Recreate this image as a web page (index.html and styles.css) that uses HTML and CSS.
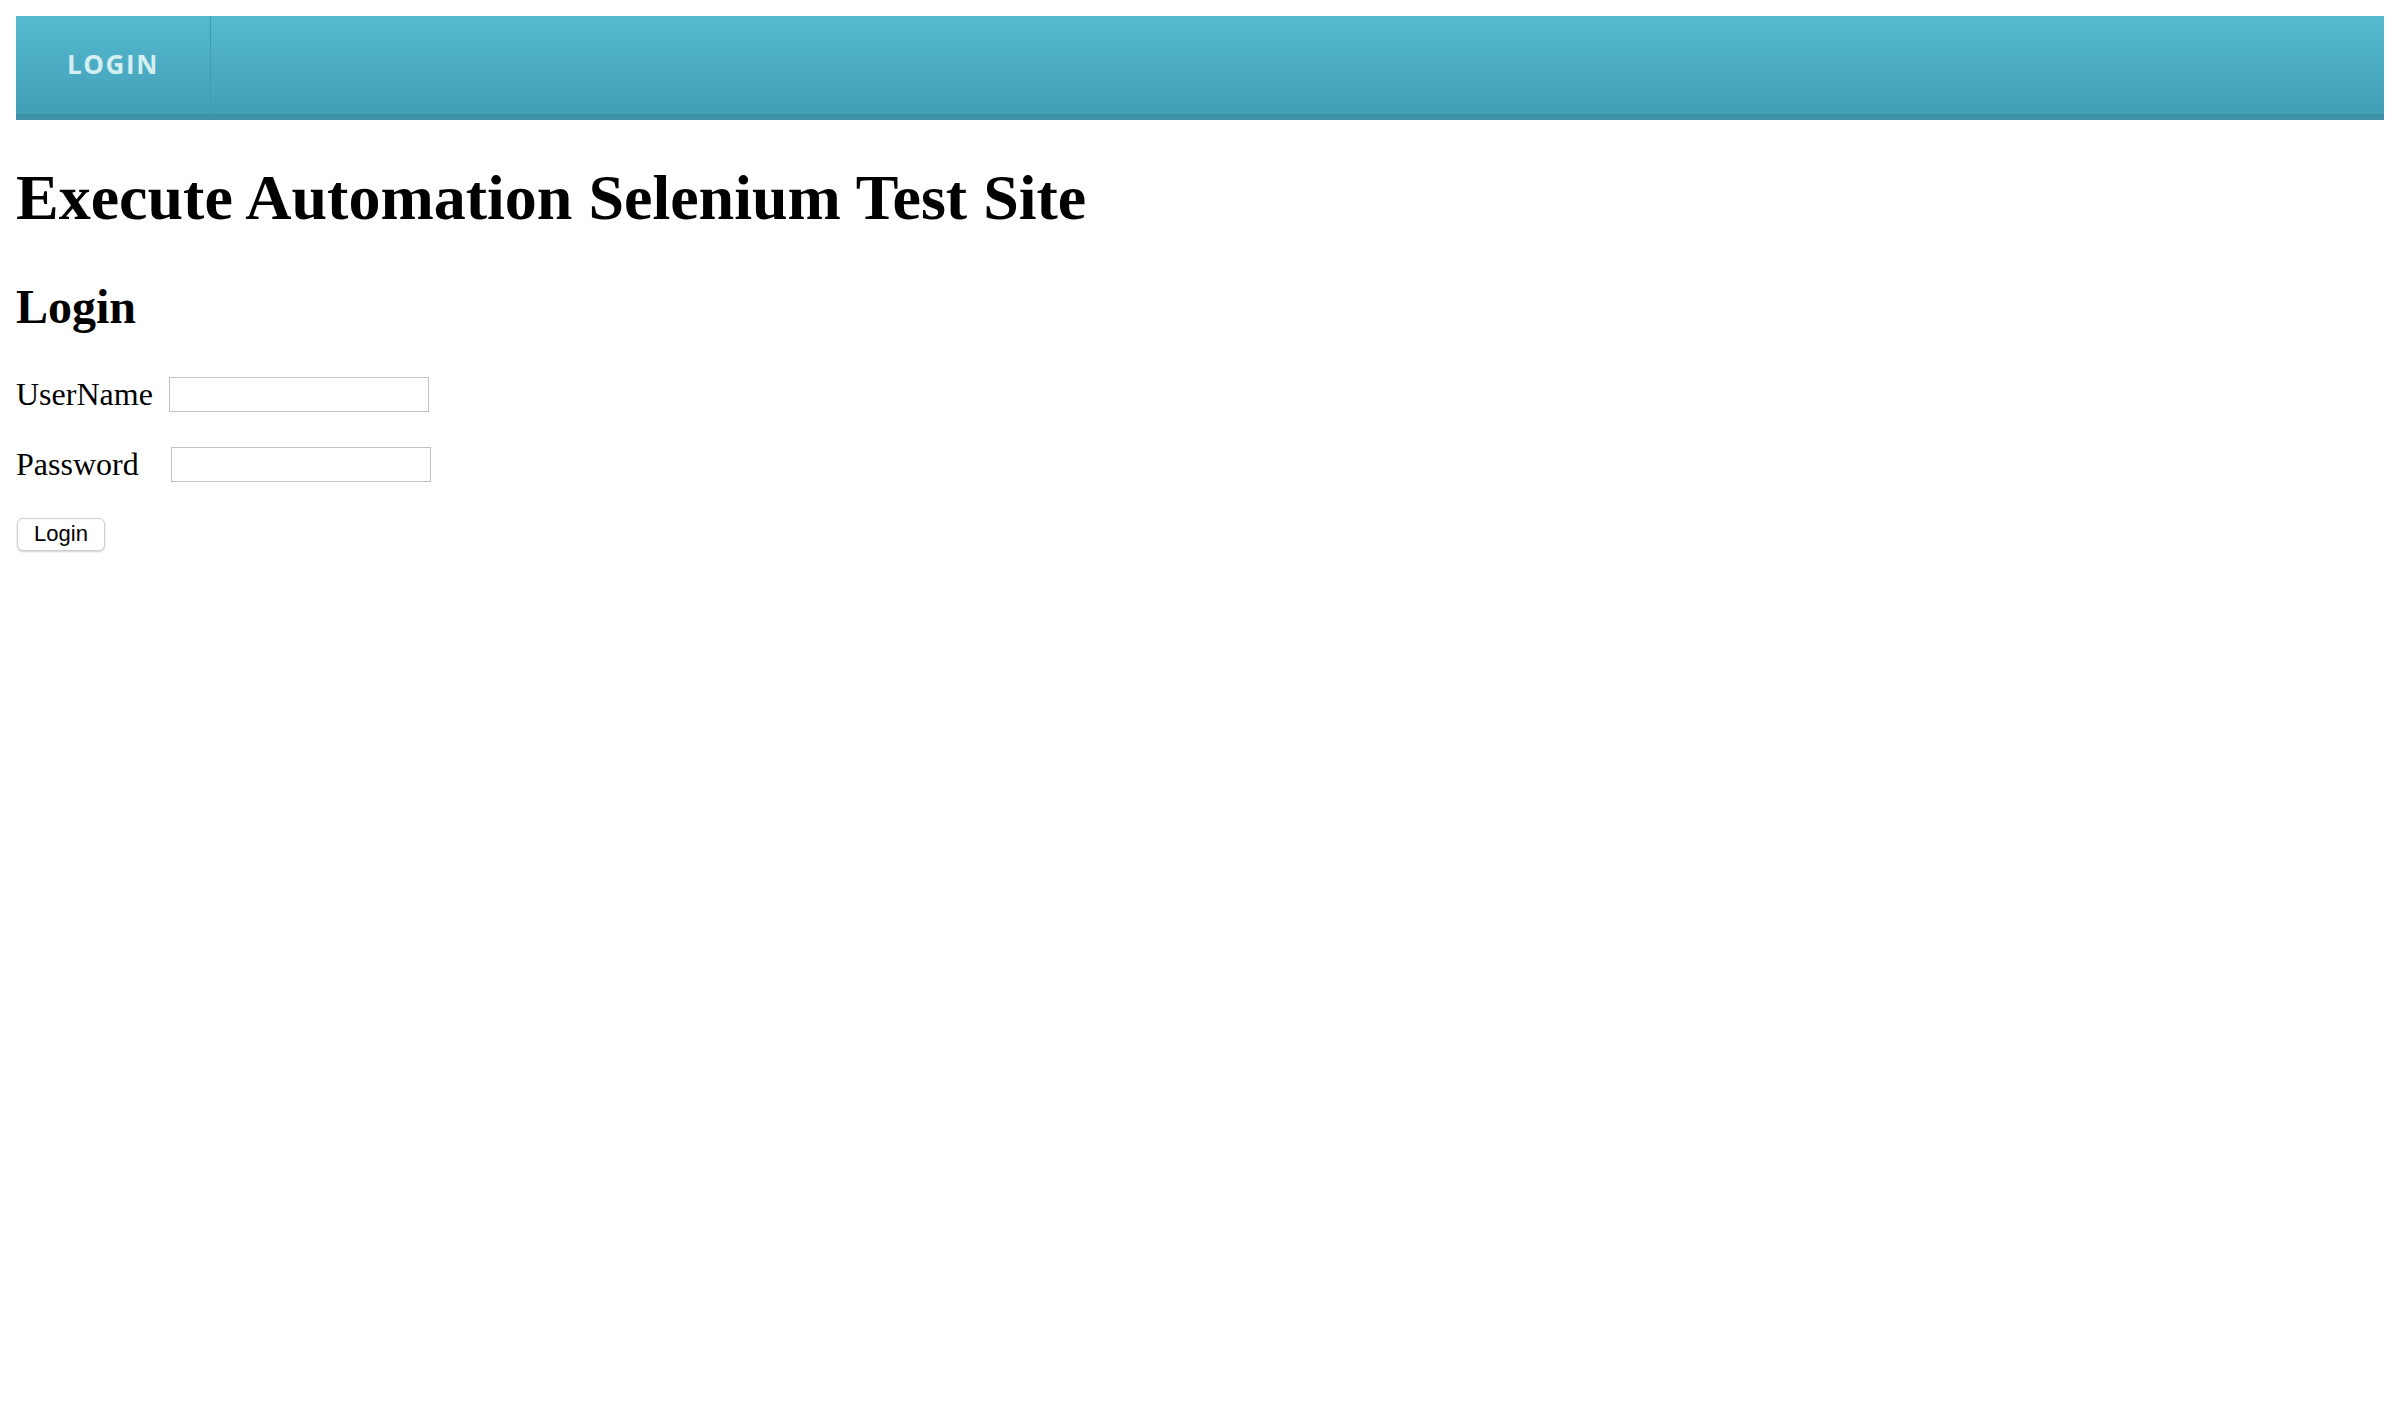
FILE: index.html
```html
<!DOCTYPE html>
<html>
<head>
<meta charset="utf-8">
<title>Execute Automation Selenium Test Site</title>
<link rel="stylesheet" href="styles.css">
</head>
<body>
<nav class="navbar">
  <a class="nav-item" href="#">LOGIN</a>
</nav>
<h1 class="title">Execute Automation Selenium Test Site</h1>
<h2 class="subtitle">Login</h2>
<form class="login-form">
  <div class="row">
    <label class="label label-user">UserName</label>
    <input class="field" type="text" name="UserName">
  </div>
  <div class="row">
    <label class="label label-pass">Password</label>
    <input class="field" type="password" name="Password">
  </div>
  <div class="row row-button">
    <button class="btn" type="button">Login</button>
  </div>
</form>
</body>
</html>
```
FILE: styles.css
```css
html, body {
  background: #ffffff;
}
body {
  margin: 16px;
  font-family: "Liberation Serif", "Times New Roman", serif;
  color: #000;
}
.navbar {
  display: flex;
  height: 98px;
  background: linear-gradient(to bottom, #56b9d0 0%, #4aabc2 55%, #429fb5 100%);
  border-bottom: 6px solid #3c91a5;
}
.nav-item {
  display: block;
  padding: 0 51px 0 51px;
  line-height: 96px;
  font-family: "Open Sans", "Liberation Sans", sans-serif;
  font-weight: 700;
  font-size: 26px;
  letter-spacing: 1.6px;
  color: #d3eff1;
  text-decoration: none;
  border-right: 1px solid #3f9bb0;
}
.title {
  font-size: 64px;
  font-weight: bold;
  line-height: 74px;
  margin: 41px 0 0 0;
}
.subtitle {
  font-size: 48px;
  font-weight: bold;
  line-height: 56px;
  margin: 44px 0 0 0;
}
.login-form {
  margin-top: 41px;
}
.row {
  display: flex;
  align-items: center;
  height: 36px;
  margin-bottom: 34px;
  font-size: 32px;
}
.label-user {
  margin-right: 16px;
}
.label-pass {
  margin-right: 32px;
}
.field {
  box-sizing: border-box;
  width: 260px;
  height: 35px;
  margin: 0;
  padding: 2px 4px;
  border: 1px solid #c2c2c2;
  border-radius: 0;
  background: #fff;
  font-size: 26px;
}
.row-button {
  margin-top: 12px;
}
.btn {
  box-sizing: border-box;
  width: 88px;
  height: 33px;
  margin: 0 0 0 1px;
  padding: 0;
  background: #fff;
  border: 1px solid #cfcfcf;
  border-radius: 6px;
  box-shadow: 0 1px 2px rgba(0, 0, 0, 0.18);
  font-family: "Liberation Sans", Arial, sans-serif;
  font-size: 22px;
  color: #000;
}
```
